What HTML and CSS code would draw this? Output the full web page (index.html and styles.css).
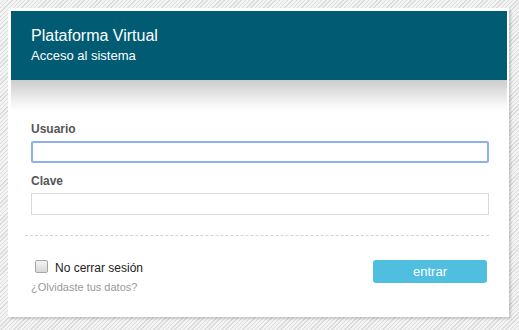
FILE: index.html
```html
<!DOCTYPE html>
<html lang="es">
<head>
<meta charset="utf-8">
<title>Plataforma Virtual</title>
<link rel="stylesheet" href="styles.css">
</head>
<body>
<div class="card">
  <div class="header">
    <div class="title">Plataforma Virtual</div>
    <div class="subtitle">Acceso al sistema</div>
  </div>
  <form class="body">
    <label class="label" for="u">Usuario</label>
    <input class="field focus" id="u" type="text">
    <label class="label second" for="p">Clave</label>
    <input class="field" id="p" type="password">
    <div class="divider"></div>
    <div class="footer">
      <div class="left">
        <label class="remember"><span class="check"></span><span>No cerrar sesión</span></label>
        <a class="forgot" href="#">¿Olvidaste tus datos?</a>
      </div>
      <button class="btn" type="button">entrar</button>
    </div>
  </form>
</div>
</body>
</html>
```

FILE: styles.css
```css
html, body {
  height: 100%;
}
body {
  margin: 0;
  padding: 8px;
  box-sizing: border-box;
  font-family: "Liberation Sans", Arial, sans-serif;
  background-color: #ececec;
  background-image: repeating-linear-gradient(-45deg, #dcdcdc 0 1px, #f3f3f3 1px 3px);
}
.card {
  width: 501px;
  height: 309px;
  box-sizing: border-box;
  padding: 3px 2px 0 3px;
  background: #fff;
  box-shadow: 2px 2px 2px rgba(0,0,0,0.16);
}
.header {
  height: 69px;
  box-sizing: border-box;
  background: #005b73;
  color: #fff;
  padding: 15px 20px 0;
}
.title {
  font-size: 16px;
  line-height: 20px;
}
.subtitle {
  font-size: 13px;
  line-height: 16px;
  margin-top: 2px;
}
.body {
  display: flex;
  flex-direction: column;
  padding: 42px 18px 0 20px;
  background: linear-gradient(#cccccc, #f6f6f6 24px, #ffffff 32px) no-repeat;
  background-size: 100% 34px;
}
.label {
  font-size: 12px;
  font-weight: bold;
  color: #555;
  line-height: 14px;
}
.label.second {
  margin-top: 11px;
}
.field {
  margin: 5px 0 0;
  width: 458px;
  height: 22px;
  box-sizing: border-box;
  border: 1px solid #d9d9d9;
  background: #fff;
  outline: none;
  padding: 0 4px;
}
.field.focus {
  border: 2px solid #8eb1ee;
  border-radius: 2px;
}
.divider {
  margin: 20px 0 0 -6px;
  width: 464px;
  border-top: 1px dashed #d4d4d4;
}
.footer {
  display: flex;
  justify-content: space-between;
  align-items: flex-start;
  margin-top: 25px;
  width: 456px;
}
.left {
  display: flex;
  flex-direction: column;
}
.remember {
  display: flex;
  align-items: center;
  font-size: 12px;
  color: #222;
  margin-left: 4px;
  line-height: 14px;
}
.check {
  width: 11px;
  height: 11px;
  border: 1px solid #a5a5a5;
  border-radius: 2px;
  background: linear-gradient(#f4f4f4, #d8d8d8);
  margin-right: 7px;
  margin-top: -3px;
}
.forgot {
  font-size: 11px;
  color: #9a9a9a;
  text-decoration: none;
  margin-top: 6px;
  line-height: 13px;
}
.btn {
  width: 114px;
  height: 23px;
  margin-top: -1px;
  border: none;
  border-radius: 3px;
  background: #4fbedf;
  color: #fff;
  font-family: "Liberation Sans", Arial, sans-serif;
  font-size: 13px;
  padding: 0;
  cursor: pointer;
}
```
